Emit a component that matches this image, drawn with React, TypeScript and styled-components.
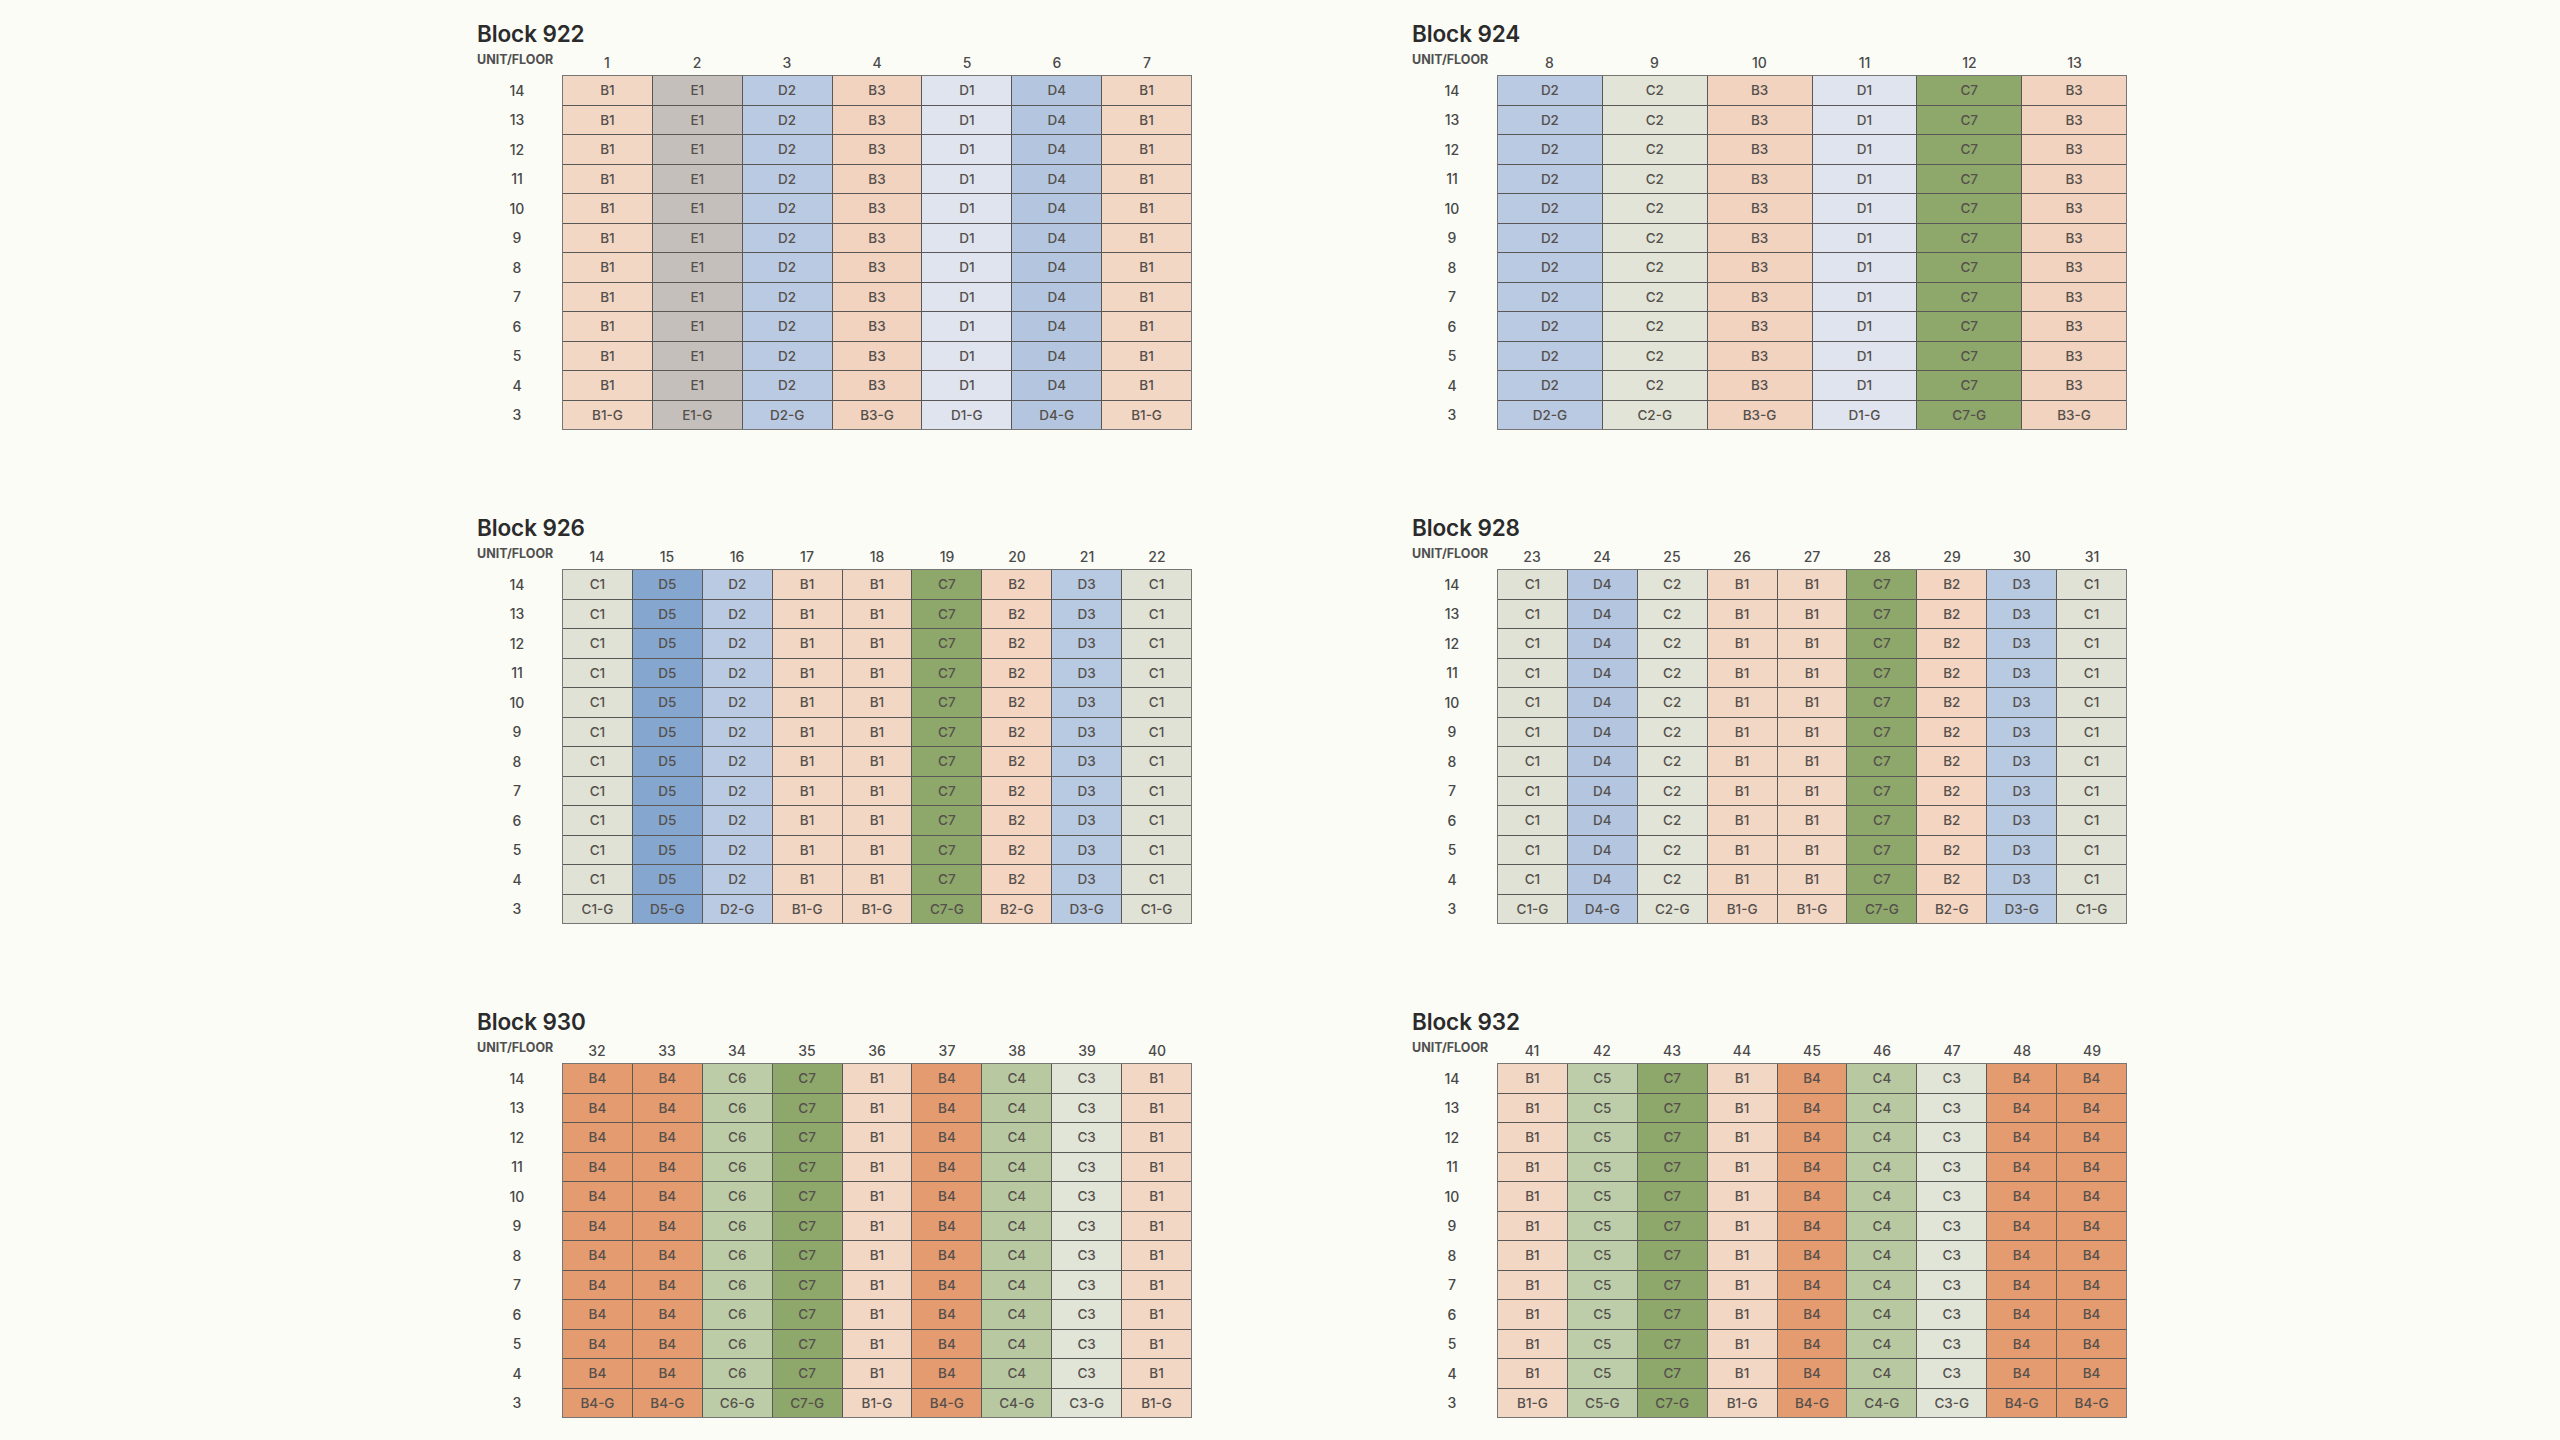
import styled, { createGlobalStyle } from 'styled-components';

const GlobalStyle = createGlobalStyle`
  html, body {
    margin: 0;
    padding: 0;
    background: #fcfcf7;
  }
  body {
    font-family: Inter, 'Noto Sans', 'Liberation Sans', sans-serif;
  }
`;

// colour per unit type
const COLORS: Record<string, string> = {
  B1: '#f3d7c5',
  B2: '#f3d5c2',
  B3: '#f1d3bf',
  B4: '#e49b70',
  C1: '#e0e2d5',
  C2: '#e1e4d6',
  C3: '#e1e5d7',
  C4: '#b8c9a2',
  C5: '#bdcda9',
  C6: '#bccca6',
  C7: '#8ea76b',
  D1: '#dfe4ef',
  D2: '#b9cae2',
  D3: '#b8c9e2',
  D4: '#b4c6df',
  D5: '#84a6cf',
  E1: '#c5bfbb',
};

type BlockData = {
  name: string;
  firstUnit: number;
  types: string[];
};

const BLOCKS: BlockData[] = [
  { name: 'Block 922', firstUnit: 1, types: ['B1', 'E1', 'D2', 'B3', 'D1', 'D4', 'B1'] },
  { name: 'Block 924', firstUnit: 8, types: ['D2', 'C2', 'B3', 'D1', 'C7', 'B3'] },
  { name: 'Block 926', firstUnit: 14, types: ['C1', 'D5', 'D2', 'B1', 'B1', 'C7', 'B2', 'D3', 'C1'] },
  { name: 'Block 928', firstUnit: 23, types: ['C1', 'D4', 'C2', 'B1', 'B1', 'C7', 'B2', 'D3', 'C1'] },
  { name: 'Block 930', firstUnit: 32, types: ['B4', 'B4', 'C6', 'C7', 'B1', 'B4', 'C4', 'C3', 'B1'] },
  { name: 'Block 932', firstUnit: 41, types: ['B1', 'C5', 'C7', 'B1', 'B4', 'C4', 'C3', 'B4', 'B4'] },
];

const FLOORS = [14, 13, 12, 11, 10, 9, 8, 7, 6, 5, 4, 3];

const Page = styled.div`
  display: grid;
  grid-template-columns: 715px 715px;
  column-gap: 220px;
  row-gap: 85px;
  padding: 21px 0 0 477px;
`;

const Block = styled.section`
  display: flex;
  flex-direction: column;
`;

const Title = styled.h2`
  margin: 0 0 4px;
  font-size: 22.5px;
  line-height: 26px;
  font-weight: 600;
  color: #2b2b2b;
  letter-spacing: -0.1px;
`;

const HeadRow = styled.div<{ $cols: number }>`
  display: grid;
  grid-template-columns: 85px repeat(${(p) => p.$cols}, 1fr);
  height: 22px;
  align-items: center;
  margin-bottom: 2px;
`;

const Corner = styled.span`
  font-size: 12.5px;
  font-weight: 700;
  color: #505050;
  padding-bottom: 6px;
  white-space: nowrap;
`;

const UnitNum = styled.span`
  text-align: center;
  font-size: 14px;
  font-weight: 500;
  color: #4a4a4a;
`;

const Body = styled.div`
  display: flex;
`;

const Floors = styled.div`
  width: 80px;
  margin-right: 5px;
  height: 355px;
  padding: 1px 0;
  box-sizing: border-box;
  display: grid;
  grid-template-rows: repeat(12, 1fr);
  row-gap: 1px;
`;

const FloorLabel = styled.span`
  display: flex;
  align-items: center;
  justify-content: center;
  font-size: 14px;
  font-weight: 500;
  color: #484848;
`;

const Table = styled.div<{ $cols: number }>`
  width: 630px;
  height: 355px;
  box-sizing: border-box;
  display: grid;
  grid-template-columns: repeat(${(p) => p.$cols}, 1fr);
  grid-template-rows: repeat(12, 1fr);
  gap: 1px;
  border: 1px solid #767676;
  background: #5a5856;
`;

const Cell = styled.div<{ $bg: string }>`
  display: flex;
  align-items: center;
  justify-content: center;
  background: ${(p) => p.$bg};
  font-size: 13.5px;
  font-weight: 500;
  color: #55504c;
`;

function PlanBlock({ block }: { block: BlockData }) {
  const cols = block.types.length;
  return (
    <Block>
      <Title>{block.name}</Title>
      <HeadRow $cols={cols}>
        <Corner>UNIT/FLOOR</Corner>
        {block.types.map((_, i) => (
          <UnitNum key={i}>{block.firstUnit + i}</UnitNum>
        ))}
      </HeadRow>
      <Body>
        <Floors>
          {FLOORS.map((f) => (
            <FloorLabel key={f}>{f}</FloorLabel>
          ))}
        </Floors>
        <Table $cols={cols}>
          {FLOORS.map((f) =>
            block.types.map((t, i) => (
              <Cell key={`${f}-${i}`} $bg={COLORS[t]}>
                {f === 3 ? `${t}-G` : t}
              </Cell>
            ))
          )}
        </Table>
      </Body>
    </Block>
  );
}

export default function App() {
  return (
    <>
      <GlobalStyle />
      <Page>
        {BLOCKS.map((b) => (
          <PlanBlock key={b.name} block={b} />
        ))}
      </Page>
    </>
  );
}
